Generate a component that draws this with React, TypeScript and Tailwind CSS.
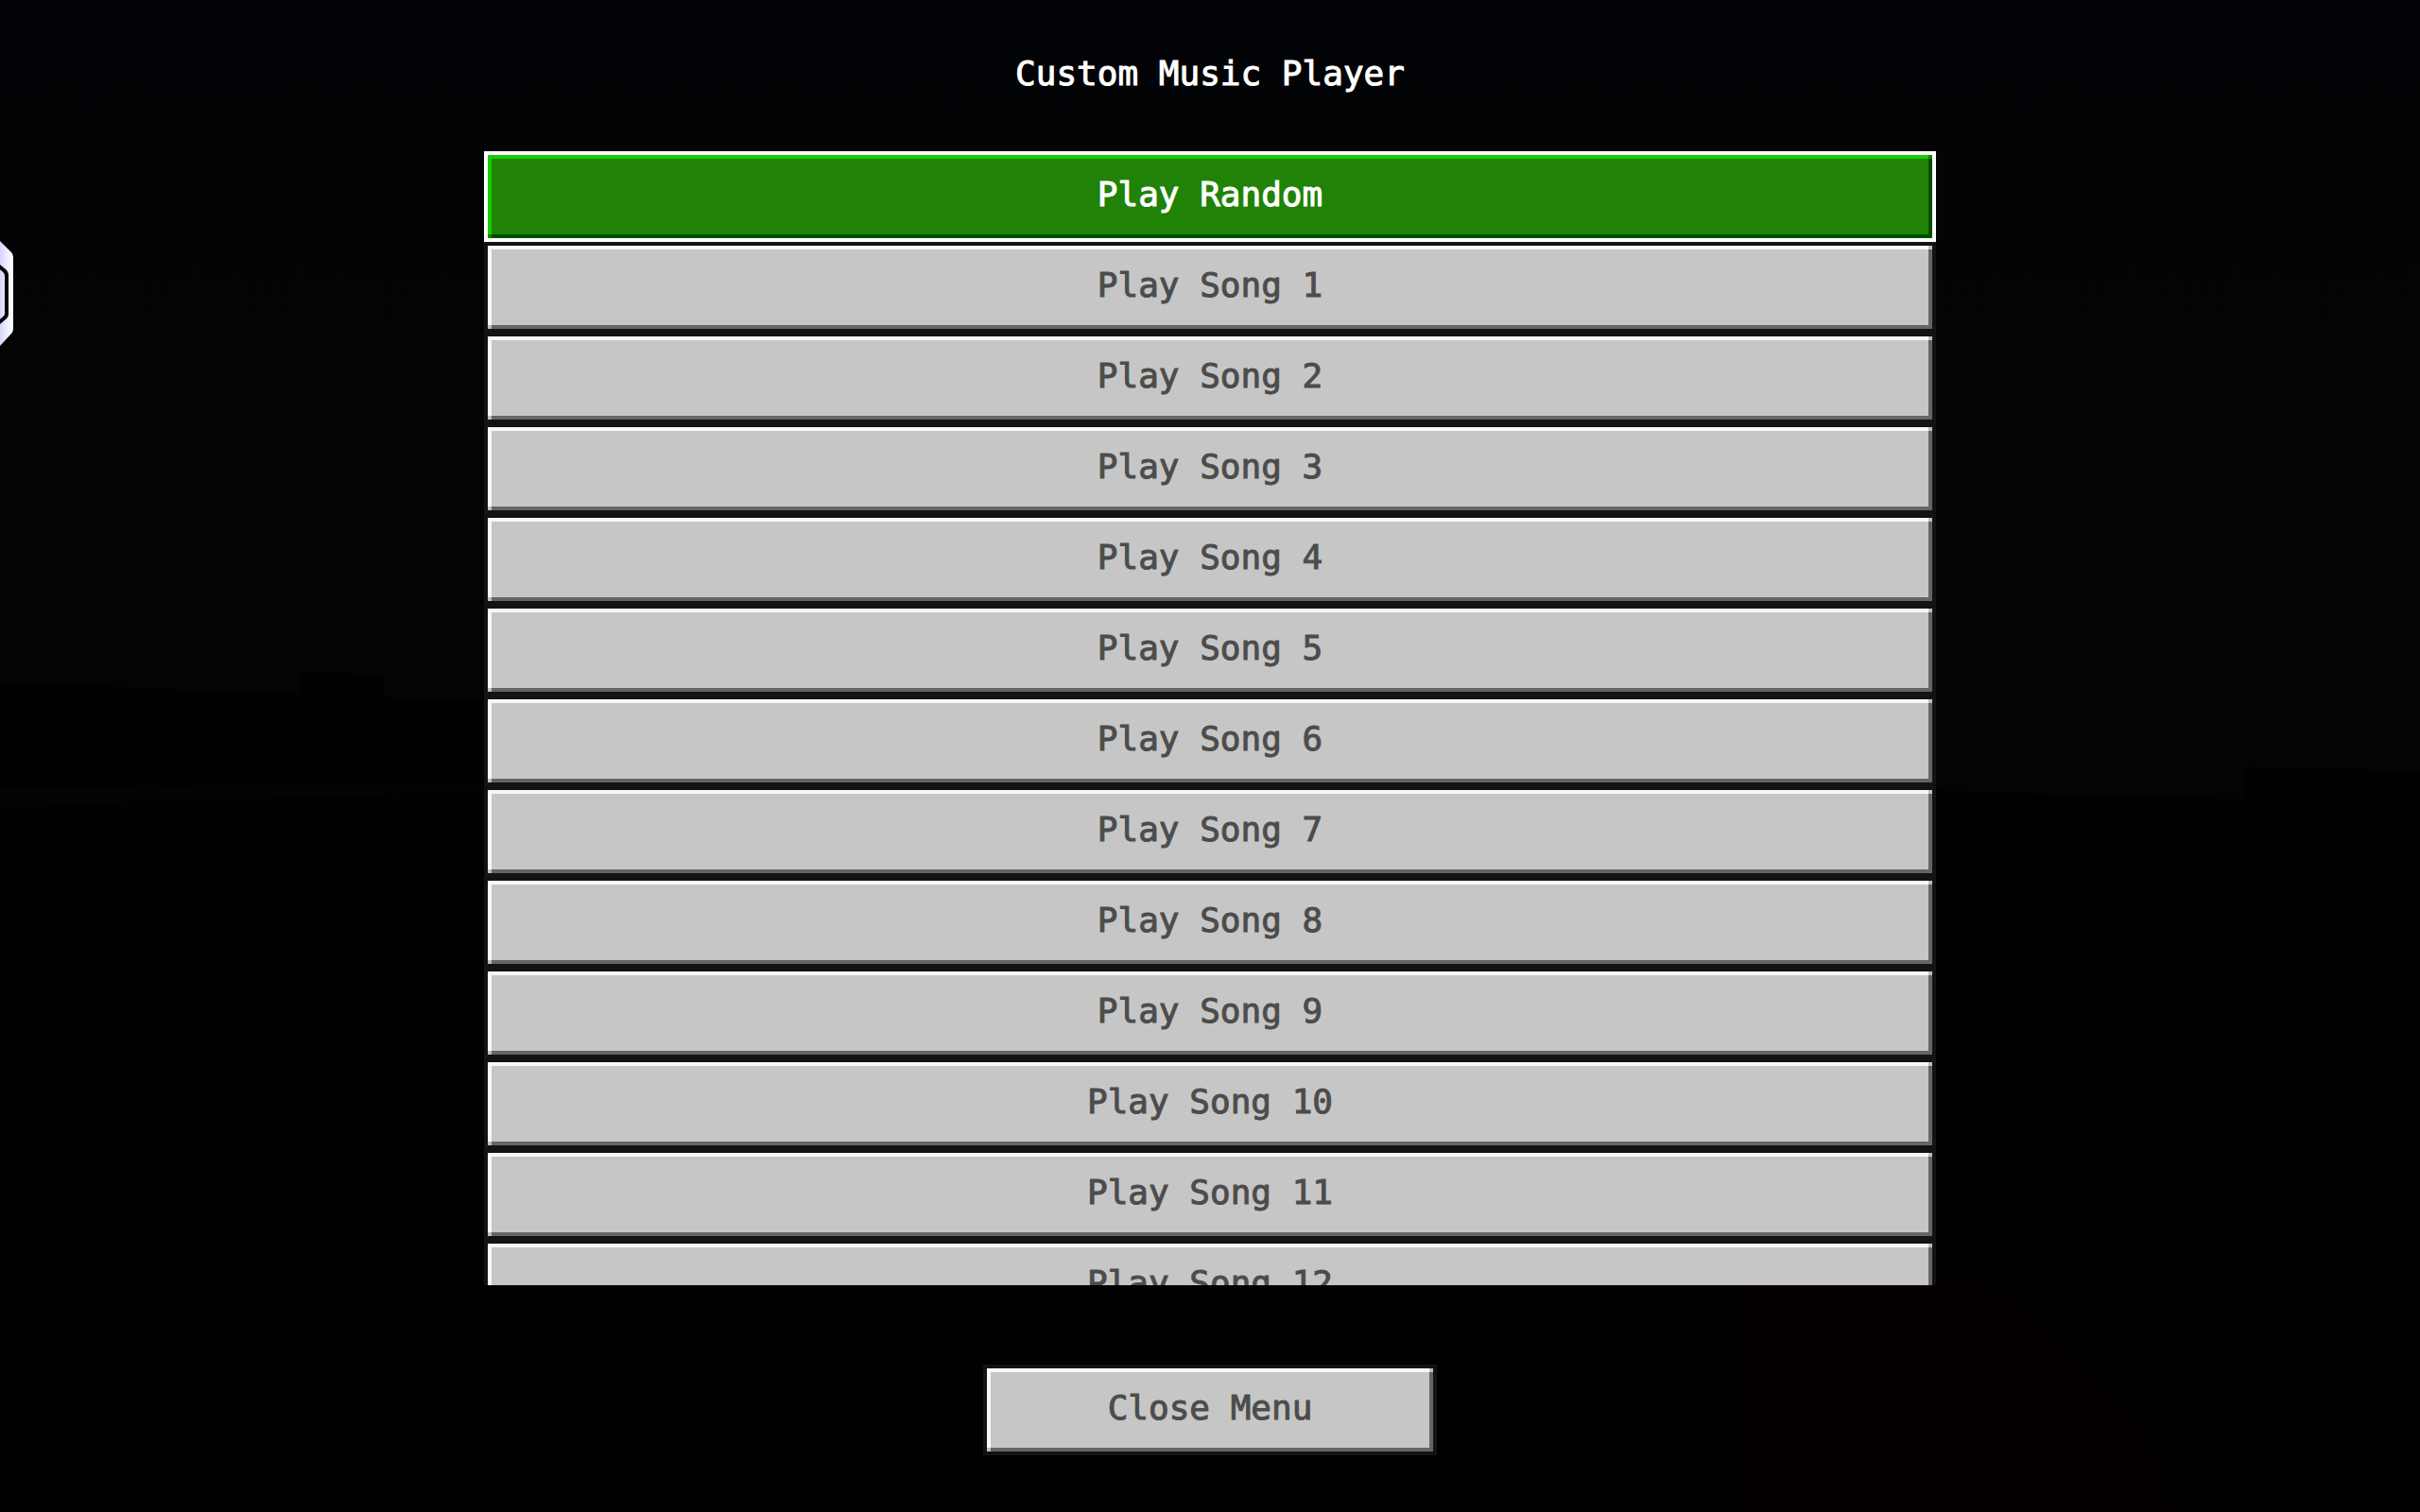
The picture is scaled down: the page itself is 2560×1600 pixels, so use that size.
import { useState } from 'react';
import clsx from 'clsx';

const SONG_COUNT = 12;

const ENTRIES = [
  'Play Random',
  ...Array.from({ length: SONG_COUNT }, (_, i) => `Play Song ${i + 1}`),
];

type MenuButtonProps = {
  label: string;
  active?: boolean;
  className?: string;
  onClick?: () => void;
};

function MenuButton({ label, active = false, className, onClick }: MenuButtonProps) {
  return (
    <button
      type="button"
      onClick={onClick}
      className={clsx(
        'relative block h-24 shrink-0 border-4 pb-1 text-center outline-none',
        active
          ? 'border-white bg-[#208206] text-white shadow-[inset_4px_4px_0_#17cd07,inset_-4px_-4px_0_#004f00]'
          : 'border-[#131313] bg-[#c6c6c6] text-[#4c4c4c] shadow-[inset_4px_4px_0_#f7f7f7,inset_-4px_-4px_0_#656565]',
        className
      )}
    >
      {/* bevel corners where light and shade meet */}
      <span className={clsx('absolute right-0 top-0 size-1', active ? 'bg-[#208206]' : 'bg-[#bebebe]')} />
      <span className={clsx('absolute bottom-0 left-0 size-1', active ? 'bg-[#208206]' : 'bg-[#bebebe]')} />
      {label}
    </button>
  );
}

function NightScene() {
  return (
    <svg
      className="absolute inset-0 h-full w-full"
      viewBox="0 0 2560 1600"
      preserveAspectRatio="none"
      aria-hidden="true"
    >
      <defs>
        <linearGradient id="sky" x1="0" y1="0" x2="0" y2="1">
          <stop offset="0" stopColor="#020306" />
          <stop offset="0.5" stopColor="#040405" />
          <stop offset="1" stopColor="#040404" />
        </linearGradient>
      </defs>
      <rect width="2560" height="860" fill="url(#sky)" />
      {/* dusk band over the horizon */}
      <path d="M400 726L520 718L2040 736L2560 762V860H400Z" fill="#060305" />
      <path
        d="M0 724H60L140 728L318 735V711H352L406 716V738L520 742L2040 836L2270 844L2374 846V812L2560 816V1600H0Z"
        fill="#010101"
      />
      <path d="M0 834L520 828V838L160 848L0 856Z" fill="#030301" />
      <path d="M1844 1350H2080L2160 1400L2262 1510L2300 1600H1840Z" fill="#050000" />
    </svg>
  );
}

function HexHandle() {
  return (
    <svg className="absolute left-0 top-[254px] h-28 w-4" viewBox="0 0 16 112" aria-hidden="true">
      <defs>
        <linearGradient id="hex" x1="0" x2="1">
          <stop offset="0" stopColor="#d4d5ff" />
          <stop offset="0.8" stopColor="#fafaff" />
        </linearGradient>
      </defs>
      <path d="M0 1L12 13Q14 15 14 18V94Q14 97 12 99L0 112Z" fill="url(#hex)" />
      <path d="M-2 27L4 32Q7 34 7 38V78Q7 81 4 83L-2 88" fill="none" stroke="#000" strokeWidth="4" />
    </svg>
  );
}

export default function App() {
  const [selected, setSelected] = useState(0);
  const [open, setOpen] = useState(true);

  return (
    <div className="relative h-screen overflow-hidden bg-[#010101] font-['DejaVu_Sans_Mono',monospace] text-[36px] leading-10 [-webkit-text-stroke:1px]">
      <NightScene />
      <HexHandle />

      {open && (
        <main className="relative flex h-full flex-col items-center">
          <header className="flex h-40 shrink-0 items-center pb-1">
            <h1 className="text-white">Custom Music Player</h1>
          </header>

          <div className="flex min-h-0 w-3/5 flex-1 flex-col overflow-y-auto [scrollbar-width:none]">
            {ENTRIES.map((label, i) => (
              <MenuButton
                key={label}
                label={label}
                active={i === selected}
                onClick={() => setSelected(i)}
              />
            ))}
          </div>

          <footer className="shrink-0 pb-[60px] pt-[84px]">
            <MenuButton label="Close Menu" className="w-[480px]" onClick={() => setOpen(false)} />
          </footer>
        </main>
      )}
    </div>
  );
}
